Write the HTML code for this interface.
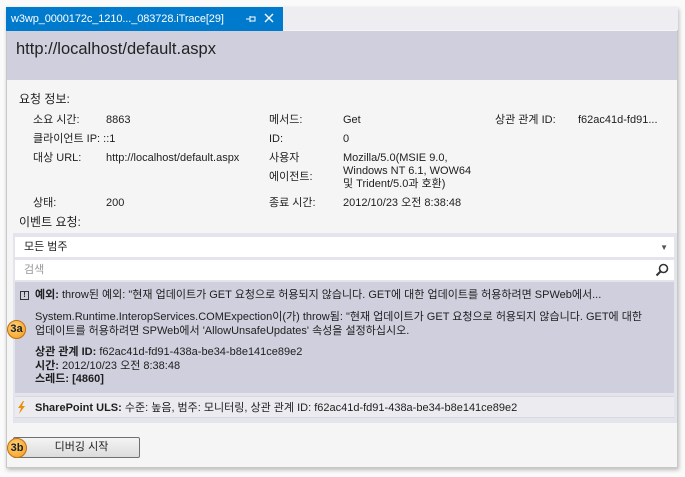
<!DOCTYPE html>
<html><head><meta charset="utf-8"><style>
*{margin:0;padding:0;box-sizing:border-box}
body{width:685px;height:477px;background:#fff;position:relative;overflow:hidden;font-family:"Liberation Sans","Noto Sans CJK KR",sans-serif;font-size:11px;color:#1e1e1e}
.a{position:absolute;white-space:nowrap;line-height:13px}
</style></head><body>
<div class="a" style="left:0;top:0;width:685px;height:477px;background:#fafafa"></div>
<div class="a" style="left:6px;top:7px;width:672px;height:461px;background:#f5f5f5;border:1px solid #c8c8c8;box-shadow:1px 2px 4px rgba(0,0,0,.25)"></div>
<div class="a" style="left:283px;top:7px;width:395px;height:23px;background:#eeeef2"></div>
<div class="a" style="left:6px;top:7px;width:277px;height:24px;background:#007acc;color:#fff;font-size:11px;padding:5px 0 0 5px;line-height:14px;letter-spacing:-0.1px">w3wp_0000172c_1210..._083728.iTrace[29]</div>
<svg class="a" style="left:245px;top:14px" width="12" height="10"><path d="M1 5H5M5 2V8M5 3H10V7H5" stroke="#fff" fill="none" stroke-width="1"/></svg>
<svg class="a" style="left:264px;top:13px" width="10" height="10"><path d="M1 1L9 9M9 1L1 9" stroke="#fff" stroke-width="1.4"/></svg>
<div class="a" style="left:7px;top:31px;width:670px;height:49px;background:#cfcfdd"></div>
<div class="a" style="left:16px;top:39px;font-size:16.5px;line-height:20px;color:#222">http://localhost/default.aspx</div>
<div class="a" style="left:19px;top:92px;font-size:12px;line-height:15px">요청 정보:</div>
<div class="a" style="left:33px;top:114px">소요 시간:</div><div class="a" style="left:106px;top:114px">8863</div>
<div class="a" style="left:269px;top:114px">메서드:</div><div class="a" style="left:343px;top:114px">Get</div>
<div class="a" style="left:495px;top:114px">상관 관계 ID:</div><div class="a" style="left:578px;top:114px">f62ac41d-fd91...</div>
<div class="a" style="left:33px;top:133px">클라이언트 IP: ::1</div>
<div class="a" style="left:269px;top:133px">ID:</div><div class="a" style="left:343px;top:133px">0</div>
<div class="a" style="left:33px;top:152px">대상 URL:</div><div class="a" style="left:106px;top:152px">http://localhost/default.aspx</div>
<div class="a" style="left:269px;top:152px">사용자</div><div class="a" style="left:269px;top:171px">에이전트:</div>
<div class="a" style="left:343px;top:152px;line-height:13px">Mozilla/5.0(MSIE 9.0,<br>Windows NT 6.1, WOW64<br>및 Trident/5.0과 호환)</div>
<div class="a" style="left:33px;top:197px">상태:</div><div class="a" style="left:106px;top:197px">200</div>
<div class="a" style="left:269px;top:197px">종료 시간:</div><div class="a" style="left:343px;top:197px">2012/10/23 오전 8:38:48</div>
<div class="a" style="left:19px;top:215px;font-size:12px;line-height:15px">이벤트 요청:</div>
<div class="a" style="left:13px;top:233px;width:664px;height:190px;background:#e4e4ec"></div>
<div class="a" style="left:15px;top:237px;width:659px;height:20px;background:#fff;padding:4px 0 0 9px">모든 범주<span style="position:absolute;right:6px;top:4px;font-size:8px;color:#555">▼</span></div>
<div class="a" style="left:15px;top:260px;width:659px;height:20px;background:#fff;padding:4px 0 0 9px;color:#999">검색
<svg style="position:absolute;right:5px;top:3px" width="14" height="14"><circle cx="8.5" cy="5.5" r="4" fill="none" stroke="#333" stroke-width="1.6"/><path d="M5.5 8.5L1.5 12.5" stroke="#333" stroke-width="2"/></svg></div>
<div class="a" style="left:15px;top:282px;width:659px;height:111px;background:#cfcfdd"></div>
<div class="a" style="left:20px;top:291px;width:9px;height:9px;border:1px solid #333;font-size:7px;line-height:7px;text-align:center;font-weight:bold">!</div>
<div class="a" style="left:35px;top:289px"><b>예외:</b> throw된 예외: "현재 업데이트가 GET 요청으로 허용되지 않습니다. GET에 대한 업데이트를 허용하려면 SPWeb에서...</div>
<div class="a" style="left:35px;top:310px;line-height:14px">System.Runtime.InteropServices.COMExpection이(가) throw됨: "현재 업데이트가 GET 요청으로 허용되지 않습니다. GET에 대한<br>업데이트를 허용하려면 SPWeb에서 'AllowUnsafeUpdates' 속성을 설정하십시오.</div>
<div class="a" style="left:7px;top:320px;width:19px;height:19px;border-radius:50%;background:radial-gradient(circle at 40% 35%,#ffd27a,#f39a1a);border:1px solid #c07010;font-size:11px;font-weight:bold;text-align:center;line-height:17px">3a</div>
<div class="a" style="left:35px;top:346px;line-height:13.5px"><b>상관 관계 ID:</b> f62ac41d-fd91-438a-be34-b8e141ce89e2<br><b>시간:</b> 2012/10/23 오전 8:38:48<br><b>스레드: [4860]</b></div>
<div class="a" style="left:15px;top:396px;width:659px;height:22px;background:#ececf0;border-top:1px solid #d8d8e0;border-bottom:1px solid #d8d8e0"></div>
<svg class="a" style="left:17px;top:401px" width="9" height="13"><path d="M6 0L1 7H4L2 13L8 5H5L7 0Z" fill="#e8900a"/></svg>
<div class="a" style="left:35px;top:402px"><b>SharePoint ULS:</b> 수준: 높음, 범주: 모니터링, 상관 관계 ID: f62ac41d-fd91-438a-be34-b8e141ce89e2</div>
<div class="a" style="left:7px;top:423px;width:670px;height:44px;background:#f5f5f5"></div>
<div class="a" style="left:13px;top:437px;width:127px;height:21px;border:1px solid #707070;border-radius:2px;background:linear-gradient(#f4f4f4,#dcdcdc);text-align:center;line-height:19px;padding-left:10px">디버깅 시작</div>
<div class="a" style="left:7px;top:438px;width:20px;height:20px;border-radius:50%;background:radial-gradient(circle at 40% 35%,#ffd27a,#f39a1a);border:1px solid #c07010;font-size:11px;font-weight:bold;text-align:center;line-height:18px">3b</div>
</body></html>
